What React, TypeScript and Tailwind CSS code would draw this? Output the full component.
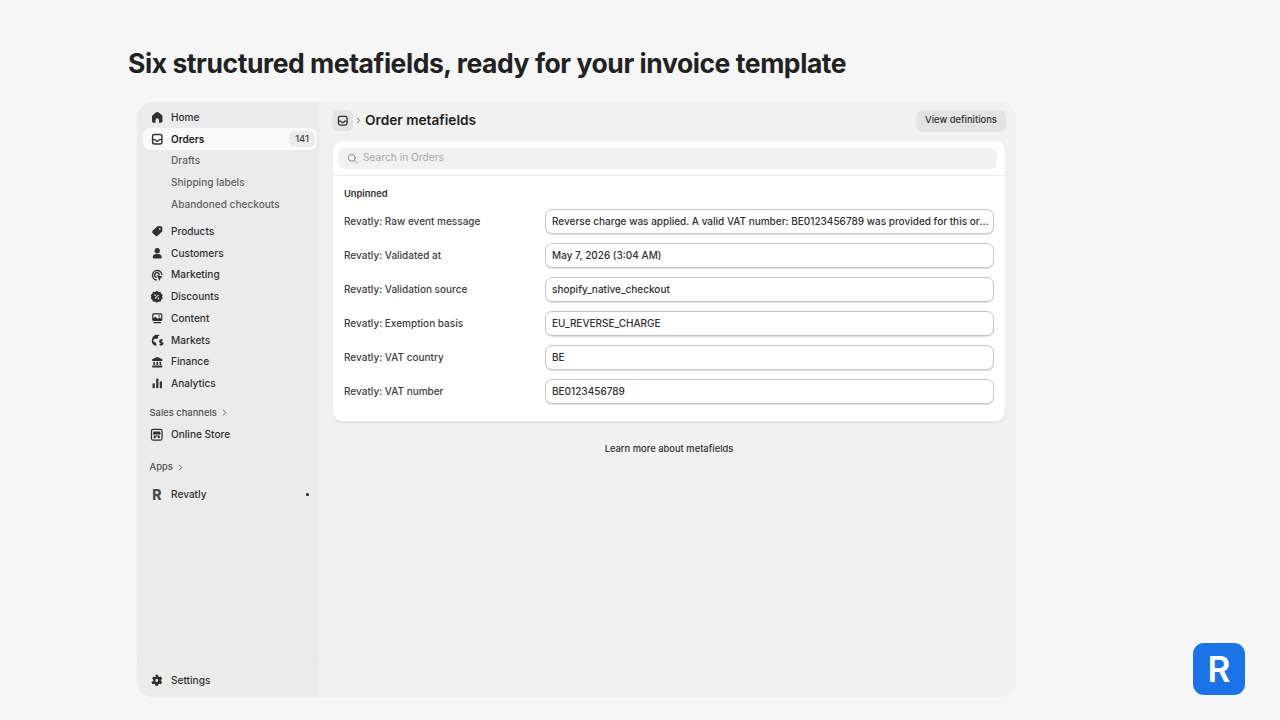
import React from "react";

const font = { fontFamily: "Inter, 'Liberation Sans', sans-serif" };

type IP = { className?: string };
const Svg = ({ children, className = "w-[12.5px] h-[12.5px]" }: { children: React.ReactNode; className?: string }) => (
  <svg viewBox="0 0 16 16" className={className + " shrink-0"} fill="#303030">{children}</svg>
);
const HomeI = () => <Svg><path d="M8 1.200c-1 0-1.800.5-2.600 1.200L3 4.400C1.900 5.300 1.300 6.200 1.300 7.600V13c0 1.100.8 1.900 1.900 1.900h2.600V11.500a2.200 2.200 0 0 1 4.400 0v3.400h2.600c1.100 0 1.900-.8 1.900-1.900V7.600c0-1.400-.6-2.300-1.700-3.200l-2.400-2C9.800 1.700 9 1.200 8 1.200z"/></Svg>;
const OrdersI = ({ className }: IP) => (
  <Svg className={className}>
    <path fill="none" stroke="#303030" strokeWidth="1.8" d="M4.500 2h7A2.500 2.500 0 0 1 14 4.500v7a2.500 2.500 0 0 1-2.500 2.500h-7A2.500 2.500 0 0 1 2 11.500v-7A2.500 2.500 0 0 1 4.500 2z"/>
    <path fill="none" stroke="#303030" strokeWidth="1.800" d="M2 8.500h2.800c.6 0 1 .4 1.200.9.300.7 1.100 1.100 2 1.100s1.700-.4 2-1.100c.2-.5.6-.9 1.200-.9H14"/>
  </Svg>
);
const TagI = () => <Svg><path d="M9 1.500h3.500c1.100 0 2 .9 2 2V7c0 .6-.2 1.100-.6 1.500l-5.400 5.400c-.8.8-2 .8-2.800 0l-3.600-3.600c-.8-.8-.8-2 0-2.800L7.500 2.100C7.900 1.700 8.400 1.500 9 1.500z"/><circle cx="11.200" cy="4.800" r="1.100" fill="#ebebeb"/></Svg>;
const PersonI = () => <Svg><circle cx="8" cy="4.700" r="3.300"/><path d="M2.200 12.800C2.200 10.300 4.500 9 8 9s5.800 1.300 5.800 3.800c0 1.200-.9 2-2 2H4.200c-1.100 0-2-.8-2-2z"/></Svg>;
const MarketingI = () => <Svg><path fill="none" stroke="#303030" strokeWidth="1.800" d="M7.500 14a6 6 0 1 1 6.400-6.500"/><path fill="none" stroke="#303030" strokeWidth="1.700" d="M7.500 10.500a2.900 2.900 0 1 1 3-3"/><path d="M7.500 7.200l8 3-3.300 1.200-1.200 3.800z"/></Svg>;
const DiscountI = () => <Svg className="w-[13.5px] h-[13.5px]"><path d="M8 .8l2 1.500 2.500-.2.700 2.400 2 1.500-.8 2 .8 2-2 1.500-.7 2.400-2.500-.2-2 1.500-2-1.500-2.500.2-.7-2.400-2-1.500.8-2-.8-2 2-1.500.7-2.400 2.500.2z"/><path stroke="#ebebeb" strokeWidth="1.300" d="M5.800 10.200l4.400-4.400"/><circle cx="6" cy="6" r="1" fill="#ebebeb"/><circle cx="10" cy="10" r="1" fill="#ebebeb"/></Svg>;
const ContentI = () => <Svg><path fillRule="evenodd" d="M3.500 1.500h9c1.100 0 2 .9 2 2v6c0 1.100-.9 2-2 2h-9c-1.100 0-2-.9-2-2v-6c0-1.100.9-2 2-2zm0 1.600a.5.5 0 0 0-.5.500V8l2.500-2 3 2.500L11 7l2 1.500V3.600a.5.500 0 0 0-.5-.5z"/><circle cx="10.500" cy="5" r="1"/><rect x="3" y="12.800" width="10" height="1.700" rx=".8"/></Svg>;
const MarketsI = () => <Svg className="w-[13px] h-[13px]"><path d="M8 1a7 7 0 0 0-2 13.700l1-1.700-1.500-2.500L3 9 2.700 7.500 5 5.500 6.500 6.500 9 4.500 8.500 2.700l2.500-.9A7 7 0 0 0 8 1z"/><path fill="none" stroke="#303030" strokeWidth="1.600" d="M14.500 7.500h-2.500a1.300 1.300 0 0 0 0 2.700h1.200a1.300 1.300 0 0 1 0 2.700H10.500M12.500 6v8.500"/></Svg>;
const FinanceI = () => <Svg><path d="M8 1.300l6.500 3v2.200h-13V4.300z"/><rect x="3" y="7.500" width="2" height="4"/><rect x="7" y="7.500" width="2" height="4"/><rect x="11" y="7.500" width="2" height="4"/><rect x="1.500" y="12.300" width="13" height="2.400" rx=".5"/></Svg>;
const AnalyticsI = () => <Svg><rect x="2" y="8" width="2.800" height="6.500" rx="1"/><rect x="6.600" y="2" width="2.800" height="12.500" rx="1"/><rect x="11.200" y="5.500" width="2.800" height="9" rx="1"/></Svg>;
const StoreI = () => <Svg className="w-[13.5px] h-[13.5px]"><path fillRule="evenodd" d="M3.500 1h9A2.500 2.500 0 0 1 15 3.500v9a2.500 2.500 0 0 1-2.500 2.500h-9A2.500 2.500 0 0 1 1 12.500v-9A2.500 2.500 0 0 1 3.500 1zm0 1.500a1 1 0 0 0-1 1v9a1 1 0 0 0 1 1h9a1 1 0 0 0 1-1v-9a1 1 0 0 0-1-1z"/><path d="M4.200 4h7.600l.7 2.600c0 1-.8 1.500-1.500 1.500-.6 0-1-.3-1.300-.6-.3.300-.9.600-1.700.6s-1.300-.3-1.700-.6c-.3.300-.7.600-1.300.6-.7 0-1.500-.5-1.500-1.500z"/><path fillRule="evenodd" d="M4.500 9h7v3h-2.200v-1.800H6.700V12H4.500z"/></Svg>;
const RevatlyI = () => <span className="w-[12px] text-center text-[14px] leading-none font-extrabold text-[#4a4a4a]">R</span>;
const GearI = () => <Svg className="w-[13.5px] h-[13.5px]"><path fillRule="evenodd" d="M6.500 1h3l.4 1.900 1.200.7 1.900-.6 1.500 2.600-1.500 1.300v1.400L14.500 9.600 13 12.200l-1.900-.6-1.200.7-.4 1.700h-3l-.4-1.700-1.200-.7-1.900.6-1.500-2.600L4 8.300V6.900L2.500 5.600 4 3l1.900.6 1.200-.7zM8 6a1.700 1.700 0 1 0 0 3.400A1.700 1.700 0 0 0 8 6z"/></Svg>;
const SearchI = () => (
  <svg viewBox="0 0 16 16" className="w-[11px] h-[11px] shrink-0" fill="none" stroke="#8a8a8a" strokeWidth="1.400" strokeLinecap="round"><circle cx="7" cy="7" r="5"/><path d="M11 11l3.500 3.500"/></svg>
);
const Chev = () => (
  <svg viewBox="0 0 8 8" className="w-[7px] h-[7px] shrink-0" fill="none" stroke="#555" strokeWidth="1" strokeLinecap="round" strokeLinejoin="round"><path d="M2.700 1.200L5.500 4 2.700 6.800"/></svg>
);

function Row({ icon, label }: { icon: React.ReactNode; label: string }) {
  return (
    <div className="h-[21.7px] pl-[14px] flex items-center gap-[8px] text-[10.1px] font-medium text-[#303030]">
      <span className="w-[12px] flex justify-center">{icon}</span>
      <span>{label}</span>
    </div>
  );
}
function Sub({ label }: { label: string }) {
  return <div className="h-[21.7px] pl-[34px] flex items-center text-[10.1px] font-medium text-[#616161]">{label}</div>;
}
function Section({ label, className }: { label: string; className: string }) {
  return (
    <div className={"pl-[12.500px] flex items-center gap-[4px] text-[9.400px] font-medium text-[#505050] " + className}>
      <span>{label}</span><Chev />
    </div>
  );
}

const FIELDS = [
  ["Revatly: Raw event message", "Reverse charge was applied. A valid VAT number: BE0123456789 was provided for this order."],
  ["Revatly: Validated at", "May 7, 2026 (3:04 AM)"],
  ["Revatly: Validation source", "shopify_native_checkout"],
  ["Revatly: Exemption basis", "EU_REVERSE_CHARGE"],
  ["Revatly: VAT country", "BE"],
  ["Revatly: VAT number", "BE0123456789"],
];

export default function App() {
  return (
    <div style={font} className="relative w-[1280px] h-[720px] overflow-hidden bg-[#f6f6f6] flex flex-col antialiased">
      <h1 className="ml-[128px] mt-[46px] h-[34px] leading-[34px] text-[26.500px] font-bold text-[#222222] tracking-[-0.44px] whitespace-nowrap">
        Six structured metafields, ready for your invoice template
      </h1>
      <div className="ml-[137px] mt-[22px] w-[879px] h-[595px] rounded-[16px] overflow-hidden flex bg-[#f1f1f1]">
        <aside className="w-[182px] shrink-0 bg-[#ebebeb] flex flex-col pt-[4.700px]">
          <Row icon={<HomeI />} label="Home" />
          <div className="ml-[6px] mr-[2px] h-[21.700px] pl-[8px] pr-[2px] flex items-center gap-[8px] bg-[#fafafa] rounded-[7px] text-[10.100px] font-semibold text-[#1a1a1a]">
            <span className="w-[12px] flex justify-center"><OrdersI /></span>
            <span className="flex-1">Orders</span>
            <span className="h-[16px] px-[6px] flex items-center rounded-[6px] bg-[#ebebeb] text-[9.500px] font-medium text-[#4a4a4a]">141</span>
          </div>
          <Sub label="Drafts" />
          <Sub label="Shipping labels" />
          <Sub label="Abandoned checkouts" />
          <div className="h-[5.700px]" />
          <Row icon={<TagI />} label="Products" />
          <Row icon={<PersonI />} label="Customers" />
          <Row icon={<MarketingI />} label="Marketing" />
          <Row icon={<DiscountI />} label="Discounts" />
          <Row icon={<ContentI />} label="Content" />
          <Row icon={<MarketsI />} label="Markets" />
          <Row icon={<FinanceI />} label="Finance" />
          <Row icon={<AnalyticsI />} label="Analytics" />
          <Section label="Sales channels" className="mt-[11px] h-[15px]" />
          <div className="mt-[3.800px]"><Row icon={<StoreI />} label="Online Store" /></div>
          <Section label="Apps" className="mt-[14px] h-[15px]" />
          <div className="mt-[9px] flex items-center pr-[10px]">
            <div className="flex-1"><Row icon={<RevatlyI />} label="Revatly" /></div>
            <span className="w-[3px] h-[3px] rounded-full bg-[#202020]" />
          </div>
          <div className="flex-1" />
          <div className="h-[36px] mr-[3px] pt-[2px] border-t-[2px] border-[#e8e8e8] flex items-center">
            <div className="w-full"><Row icon={<GearI />} label="Settings" /></div>
          </div>
        </aside>
        <main className="flex-1 min-w-0 pl-[12px] pr-[10px] pt-[7px] border-l border-[#eeeeee]">
          <header className="h-[23px] flex items-center">
            <span className="w-[21px] h-[21px] rounded-[6px] bg-[#e3e3e3] flex items-center justify-center"><OrdersI className="w-[11.500px] h-[11.500px]" /></span>
            <span className="ml-[2px] mr-[3px]"><Chev /></span>
            <span className="text-[13.700px] font-semibold text-[#1f1f1f]">Order metafields</span>
            <span className="ml-auto h-[22px] w-[90px] justify-center rounded-[7px] bg-[#e3e3e3] flex items-center text-[9.400px] font-medium text-[#303030]">View definitions</span>
          </header>
          <section className="mt-[8px] h-[282px] rounded-[10px] bg-white border border-[#ececec] shadow-[0_1px_1px_rgba(0,0,0,0.10)] flex flex-col">
            <div className="h-[35px] pl-[5px] pr-[8px] flex items-center border-b border-[#ececec]">
              <div className="w-full h-[21px] rounded-[7px] bg-[#f1f1f1] flex items-center gap-[5px] pl-[9px] text-[10.200px] text-[#a8a8a8]">
                <SearchI />
                <span>Search in Orders</span>
              </div>
            </div>
            <div className="pl-[11px] pr-[11px]">
              <div className="mt-[11px] h-[14px] leading-[14px] text-[9.300px] font-semibold text-[#303030]">Unpinned</div>
              <div className="mt-[8px] flex flex-col gap-[9px]">
                {FIELDS.map(([k, v]) => (
                  <div key={k} className="flex items-center h-[25px]">
                    <span className="w-[201px] shrink-0 text-[10px] font-medium text-[#404040]">{k}</span>
                    <span className="flex-1 min-w-0 h-[25px] pl-[6px] pr-[3px] rounded-[7px] border border-[#c6c6c6] bg-white shadow-[0_1px_0_rgba(0,0,0,0.12)] flex items-center text-[10px] font-medium text-[#303030]">
                      <span className="truncate">{v}</span>
                    </span>
                  </div>
                ))}
              </div>
            </div>
          </section>
          <div className="mt-[20px] text-center text-[9.400px] leading-[14px] font-medium text-[#303030]">Learn more about metafields</div>
        </main>
      </div>
      <div className="absolute left-[1193px] top-[643px] w-[52px] h-[52px] rounded-[11px] bg-[#1a73e8] flex items-center justify-center text-white text-[35px] font-semibold leading-none">R</div>
    </div>
  );
}
